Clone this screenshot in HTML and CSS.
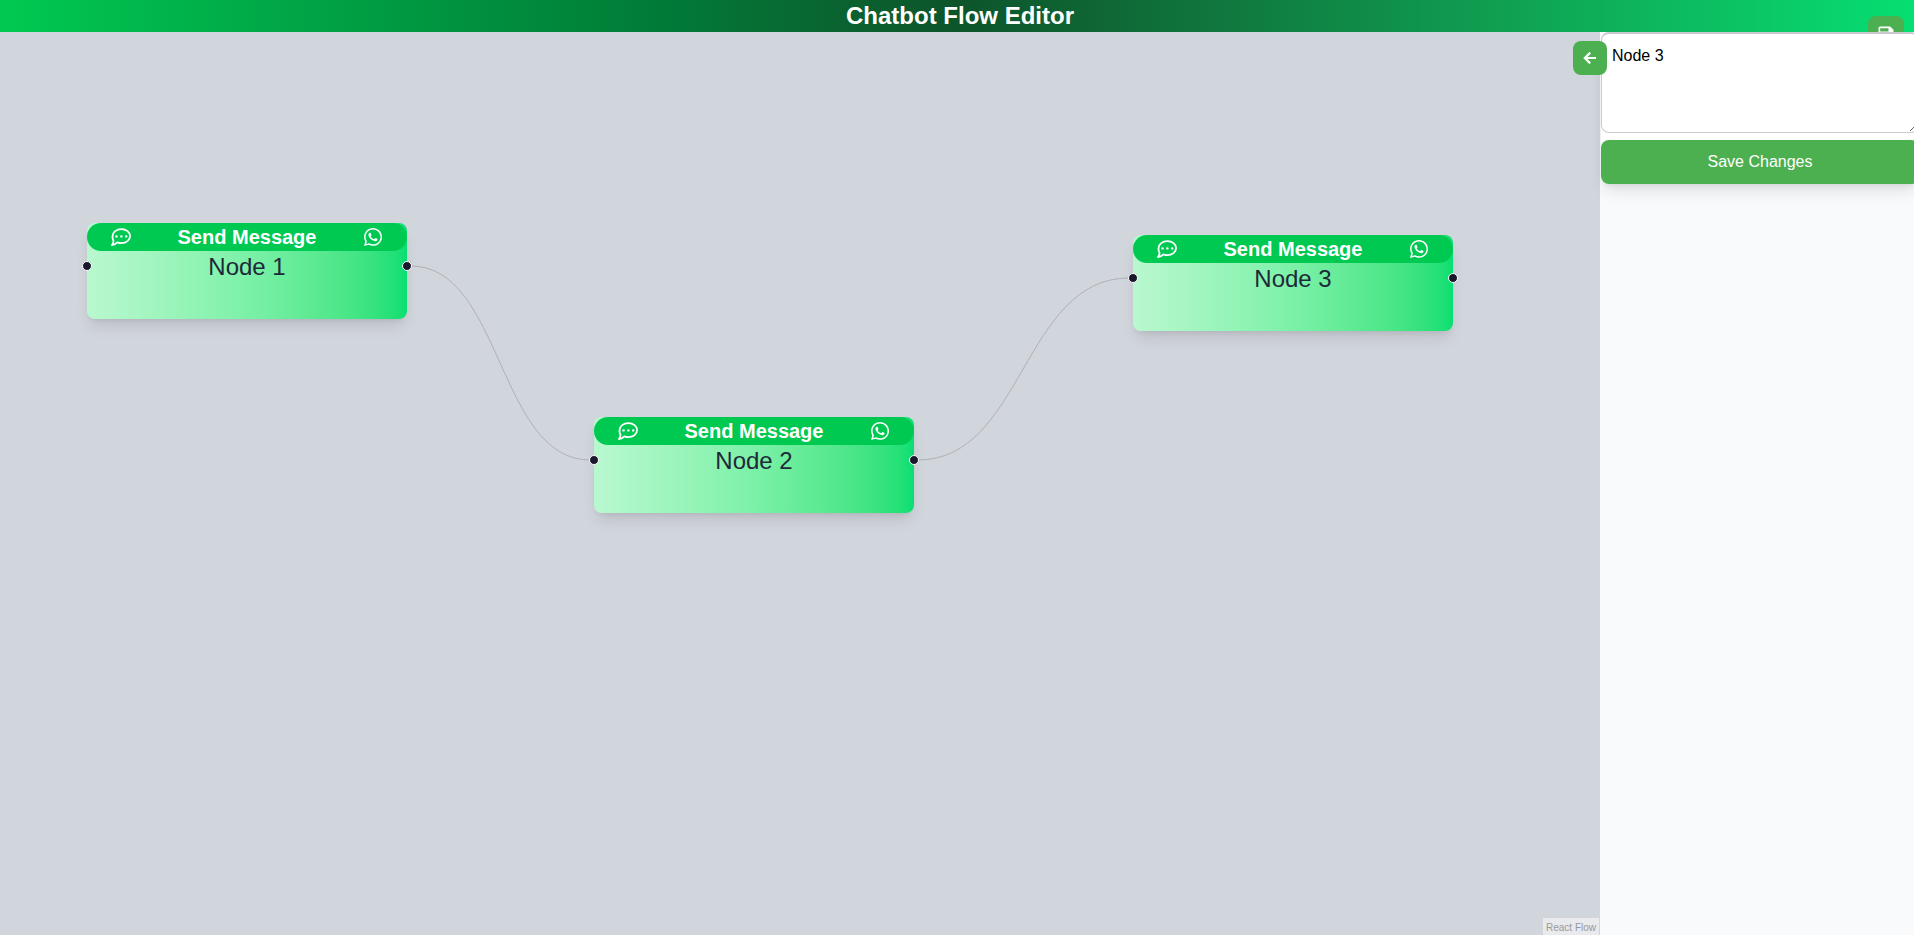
FILE: index.html
```html
<!DOCTYPE html>
<html lang="en">
<head>
<meta charset="utf-8">
<title>Chatbot Flow Editor</title>
<link rel="stylesheet" href="styles.css">
</head>
<body>
<svg class="sprite" aria-hidden="true">
  <symbol id="chat" viewBox="0 0 20 18">
    <path d="M10.400 1.200C15.200 1.200 19.100 4.100 19.100 8.100s-3.900 7-8.700 7c-1.500 0-2.900-.3-4.100-.8C5 15.700 3.200 16.800 1 17.100c.9-1.300 1.500-2.800 1.500-4.400A6.500 6.500 0 0 1 1.600 8.100C1.600 4.100 5.500 1.200 10.400 1.200z" fill="none" stroke="currentColor" stroke-width="1.800" stroke-linejoin="round"/>
    <circle cx="5.500" cy="8.400" r="1.200" fill="currentColor"/><circle cx="10.400" cy="8.400" r="1.200" fill="currentColor"/><circle cx="15.200" cy="8.400" r="1.200" fill="currentColor"/>
  </symbol>
  <symbol id="whatsapp" viewBox="0 32 448 448">
    <path fill="currentColor" d="M380.900 97.100C339 55.100 283.200 32 223.900 32c-122.400 0-222 99.600-222 222 0 39.100 10.200 77.300 29.600 111L0 480l117.700-30.900c32.400 17.700 68.900 27 106.100 27h.1c122.300 0 224.100-99.600 224.100-222 0-59.300-25.200-115-67.100-157zm-157 341.600c-33.200 0-65.700-8.900-94-25.700l-6.700-4-69.800 18.300L72 359.200l-4.400-7c-18.500-29.400-28.200-63.300-28.200-98.200 0-101.700 82.800-184.500 184.600-184.500 49.300 0 95.600 19.200 130.400 54.100 34.800 34.900 56.200 81.200 56.100 130.500 0 101.800-84.900 184.600-186.600 184.600zm101.200-138.200c-5.500-2.800-32.800-16.200-37.900-18-5.100-1.900-8.800-2.800-12.500 2.800-3.700 5.600-14.300 18-17.600 21.800-3.200 3.700-6.500 4.200-12 1.400-32.600-16.300-54-29.100-75.500-66-5.700-9.800 5.700-9.100 16.300-30.300 1.800-3.700.9-6.900-.5-9.700-1.400-2.800-12.500-30.100-17.100-41.200-4.500-10.800-9.100-9.300-12.500-9.500-3.200-.2-6.900-.2-10.600-.2-3.700 0-9.700 1.400-14.800 6.900-5.100 5.600-19.400 19-19.400 46.300 0 27.300 19.900 53.700 22.600 57.400 2.800 3.700 39.100 59.700 94.800 83.800 35.200 15.200 49 16.500 66.600 13.900 10.700-1.600 32.800-13.400 37.400-26.400 4.600-13 4.600-24.100 3.200-26.400-1.300-2.500-5-3.900-10.500-6.600z"/>
  </symbol>
</svg>
<header class="topbar">
  <h1 class="title">Chatbot Flow Editor</h1>
  <button class="save-flow" type="button" aria-label="Save flow">
    <svg class="save-icon" viewBox="0 0 24 24" aria-hidden="true"><path fill="currentColor" d="M17 3H5a2 2 0 0 0-2 2v14a2 2 0 0 0 2 2h14c1.100 0 2-.9 2-2V7l-4-4zm-5 16a3 3 0 1 1 0-6 3 3 0 0 1 0 6zm3-10H5V5h10v4z"/></svg>
  </button>
</header>
<main class="workspace">
  <section class="canvas" aria-label="Flow">
    <svg class="edges" aria-hidden="true">
      <path d="M411 234C502 234 498 428 590 428"/>
      <path d="M918 428C1023 428 1023 246 1129 246"/>
    </svg>
    <article class="node node-1">
      <div class="node-head"><svg class="node-icon"><use href="#chat"/></svg><strong>Send Message</strong><svg class="node-icon"><use href="#whatsapp"/></svg></div>
      <div class="node-text">Node 1</div>
      <span class="handle handle-in"></span><span class="handle handle-out"></span>
    </article>
    <article class="node node-2">
      <div class="node-head"><svg class="node-icon"><use href="#chat"/></svg><strong>Send Message</strong><svg class="node-icon"><use href="#whatsapp"/></svg></div>
      <div class="node-text">Node 2</div>
      <span class="handle handle-in"></span><span class="handle handle-out"></span>
    </article>
    <article class="node node-3">
      <div class="node-head"><svg class="node-icon"><use href="#chat"/></svg><strong>Send Message</strong><svg class="node-icon"><use href="#whatsapp"/></svg></div>
      <div class="node-text">Node 3</div>
      <span class="handle handle-in"></span><span class="handle handle-out"></span>
    </article>
    <a class="attribution" href="#flow">React Flow</a>
  </section>
  <aside class="panel">
    <button class="back" type="button" aria-label="Back">
      <svg class="back-icon" viewBox="0 0 14 14" aria-hidden="true"><path d="M13 7H2.200M7.200 1.600L1.800 7L7.200 12.400" fill="none" stroke="currentColor" stroke-width="2.200"/></svg>
    </button>
    <form class="settings">
      <textarea class="message" aria-label="Message">Node 3</textarea>
      <button class="save" type="button">Save Changes</button>
    </form>
  </aside>
</main>
</body>
</html>
```
FILE: styles.css
```css
* { box-sizing: border-box; }
body {
  margin: 0;
  height: 100vh;
  display: flex;
  flex-direction: column;
  overflow: hidden;
  font-family: "Liberation Sans", Arial, sans-serif;
  font-size: 16px;
  line-height: 24px;
}
button, textarea { font: inherit; border: 0; margin: 0; }
button { cursor: pointer; padding: 0; color: #fff; background: #4caf50; }
.sprite { display: none; }

.topbar {
  position: relative;
  flex: none;
  overflow: hidden;
  padding-left: 6px;
  color: #fff;
  text-align: center;
  background: linear-gradient(to right in oklab, #00c951, #007a37 35%, #0d542b 50%, #05df72);
}
.title { margin: 0; font-size: 24px; line-height: 32px; font-weight: 700; }
.save-flow {
  position: absolute;
  top: 16px;
  right: 10px;
  width: 36px;
  height: 36px;
  border-radius: 8px;
  display: grid;
  place-items: center;
}
.save-icon { width: 20px; height: 20px; }

.workspace { flex: 1; min-height: 0; display: flex; }
.canvas { position: relative; flex: 1; min-width: 0; background: #d1d5dc; }
.edges { position: absolute; inset: 0; width: 100%; height: 100%; }
.edges path { fill: none; stroke: #b1b1b7; stroke-width: 1; }

.node {
  position: absolute;
  width: 320px;
  height: 96px;
  border-radius: 8px;
  color: #1e2939;
  text-align: center;
  background: linear-gradient(to right in oklab, #b9f8cf, #7bf1a8, #05df72);
  box-shadow: 0 10px 15px -3px rgb(0 0 0 / .1), 0 4px 6px -4px rgb(0 0 0 / .1);
}
.node-1 { left: 87px; top: 191px; }
.node-2 { left: 594px; top: 385px; }
.node-3 { left: 1133px; top: 203px; }
.node-head {
  display: flex;
  align-items: center;
  justify-content: space-between;
  padding: 0 24px;
  border-radius: 14px;
  font-size: 20px;
  line-height: 28px;
  color: #fff;
  background: #00c951;
}
.node-icon { width: 20px; height: 18px; }
.node-text { font-size: 24px; line-height: 32px; }
.handle {
  position: absolute;
  top: 38px;
  width: 10px;
  height: 10px;
  border: 1px solid #fff;
  border-radius: 50%;
  background: #1a192b;
}
.handle-in { left: -5px; }
.handle-out { right: -5px; }
.attribution {
  position: absolute;
  right: 1px;
  bottom: 0;
  padding: 2px 3px 0;
  font-size: 10px;
  line-height: 15px;
  color: #999;
  text-decoration: none;
  background: rgb(255 255 255 / .5);
}

.panel { position: relative; flex: none; width: 314px; background: #f9fafb; }
.back {
  position: absolute;
  z-index: 1;
  top: 9px;
  left: -27px;
  width: 34px;
  height: 34px;
  border-radius: 8px;
  display: grid;
  place-items: center;
}
.back-icon { width: 14px; height: 14px; }
.settings {
  display: flex;
  flex-direction: column;
  gap: 7px;
  margin: 0 -5px 0 1px;
  background: #fff;
  border-radius: 8px;
  box-shadow: 0 10px 15px -3px rgb(0 0 0 / .1), 0 4px 6px -4px rgb(0 0 0 / .1);
}
.message {
  height: 101px;
  padding: 10px;
  border: 1px solid #ccc;
  border-top: 2px solid #c8cad0;
  border-radius: 8px;
  color: #000;
  background: #fff;
}
.save { height: 44px; border-radius: 8px; }
```
